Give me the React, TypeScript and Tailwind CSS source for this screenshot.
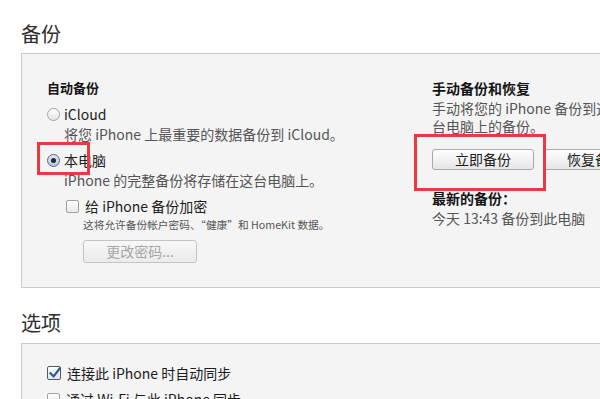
import React from 'react';

const FONT = { fontFamily: '"Noto Sans CJK SC", "Noto Sans", sans-serif' };

function Radio({ checked }: { checked?: boolean }) {
  return checked ? (
    <span className="flex h-[13px] w-[13px] shrink-0 items-center justify-center rounded-full border border-[#56677d] bg-gradient-to-b from-[#dfe8f3] to-[#b9c9dc]">
      <span className="h-[5px] w-[5px] rounded-full bg-[#1b2a3f]" />
    </span>
  ) : (
    <span className="h-[13px] w-[13px] shrink-0 rounded-full border border-[#a3a3a3] bg-gradient-to-b from-[#ffffff] to-[#e4e4e4]" />
  );
}

function Checkbox({ checked }: { checked?: boolean }) {
  return checked ? (
    <span className="relative flex h-[14px] w-[14px] shrink-0 items-center justify-center rounded-[2px] border border-[#4f5c6c] bg-gradient-to-b from-[#fdfdfd] to-[#e3e8ee]">
      <svg viewBox="0 0 14 14" className="absolute -top-[1px] left-[0px] h-[14px] w-[14px]">
        <path d="M2.5 7.2 L5.6 10.4 L11.6 2.6" fill="none" stroke="#2b5b9a" strokeWidth="2.2" strokeLinecap="square" />
      </svg>
    </span>
  ) : (
    <span className="h-[13px] w-[13px] shrink-0 rounded-[2px] border border-[#a0a0a0] bg-gradient-to-b from-[#ffffff] to-[#e8e8e8]" />
  );
}

function Button({ children, disabled, className = '' }: { children: React.ReactNode; disabled?: boolean; className?: string }) {
  return (
    <button
      className={`flex shrink-0 items-center justify-center rounded-[3px] border bg-gradient-to-b text-[14px] ${
        disabled
          ? 'border-[#c4c4c4] from-[#f7f7f7] to-[#ececec] text-[#a6a6a6]'
          : 'border-[#a9a9a9] from-[#ffffff] to-[#e6e6e6] text-[#1c1c1c]'
      } ${className}`}
    >
      {children}
    </button>
  );
}

export default function App() {
  return (
    <div className="relative h-[399px] w-[600px] overflow-hidden bg-white" style={FONT}>
      {/* 备份 */}
      <h2 className="ml-[21px] mt-[20px] h-[28px] text-[20px] leading-[28px] text-[#2e2e2e]">备份</h2>
      <div className="mt-[5px] ml-[21px] flex h-[235px] w-[640px] border border-[#cacaca] bg-[#f4f4f4] pl-[25px] pt-[24px]">
        {/* 自动备份 */}
        <div className="w-[385px] shrink-0">
          <div className="h-[20px] text-[13px] font-bold leading-[20px] text-[#141414]">自动备份</div>
          <div className="mt-[6px] flex h-[20px] items-center">
            <Radio />
            <span className="ml-[4px] text-[14px] leading-[20px] text-[#1c1c1c]">iCloud</span>
          </div>
          <div className="ml-[17px] h-[20px] text-[14px] leading-[20px] text-[#555]">
            将您 iPhone 上最重要的数据备份到 iCloud。
          </div>
          <div className="mt-[6px] flex h-[20px] items-center">
            <Radio checked />
            <span className="ml-[4px] text-[14px] leading-[20px] text-[#1c1c1c]">本电脑</span>
          </div>
          <div className="ml-[17px] h-[20px] text-[14px] leading-[20px] text-[#555]">
            iPhone 的完整备份将存储在这台电脑上。
          </div>
          <div className="ml-[19px] mt-[6px] flex h-[20px] items-center">
            <Checkbox />
            <span className="ml-[6px] text-[14px] leading-[20px] text-[#1c1c1c]">给 iPhone 备份加密</span>
          </div>
          <div className="ml-[36px] mt-[1px] h-[16px] whitespace-nowrap text-[10.7px] leading-[16px] text-[#555]">
            这将允许备份帐户密码、“健康”和 HomeKit 数据。
          </div>
          <Button disabled className="ml-[36px] mt-[7px] h-[23px] w-[114px]">更改密码...</Button>
        </div>

        {/* 手动备份和恢复 */}
        <div className="w-[200px] shrink-0">
          <div className="h-[20px] text-[14px] font-bold leading-[20px] text-[#141414]">手动备份和恢复</div>
          <div className="mt-[1px] text-[14px] leading-[18px] text-[#555]">
            <div className="h-[18px] whitespace-nowrap">手动将您的 iPhone 备份到这</div>
            <div className="h-[18px] whitespace-nowrap">台电脑上的备份。</div>
          </div>
          <div className="mt-[14px] flex gap-[10px]">
            <Button className="h-[21px] w-[102px]">立即备份</Button>
            <Button className="h-[21px] w-[102px]">恢复备份</Button>
          </div>
          <div className="mt-[18px] h-[20px] text-[14px] font-bold leading-[20px] text-[#141414]">最新的备份：</div>
          <div className="h-[20px] whitespace-nowrap text-[14px] leading-[20px] text-[#555]">今天 13:43 备份到此电脑</div>
        </div>
      </div>

      {/* 选项 */}
      <h2 className="ml-[21px] mt-[21px] h-[28px] text-[20px] leading-[28px] text-[#2e2e2e]">选项</h2>
      <div className="mt-[6px] ml-[21px] h-[120px] w-[640px] border border-[#cacaca] bg-[#f4f4f4] pl-[25px] pt-[19px]">
        <div className="flex h-[20px] items-center">
          <Checkbox checked />
          <span className="ml-[6px] text-[14px] leading-[20px] text-[#1c1c1c]">连接此 iPhone 时自动同步</span>
        </div>
        <div className="mt-[6px] flex h-[20px] items-center">
          <Checkbox />
          <span className="ml-[6px] text-[14px] leading-[20px] text-[#1c1c1c]">通过 Wi-Fi 与此 iPhone 同步</span>
        </div>
      </div>

      {/* annotation boxes */}
      <div className="absolute left-[37px] top-[142px] h-[33px] w-[53px] border-[3px] border-[#ea3a3f]" />
      <div className="absolute left-[414px] top-[134px] h-[57px] w-[132px] border-[3px] border-[#ea3a3f]" />
    </div>
  );
}
